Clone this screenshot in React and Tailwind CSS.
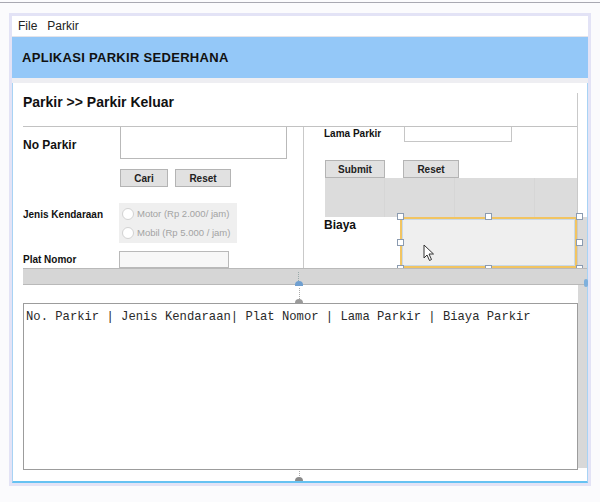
import React from 'react';

// small square grab handle of the GUI designer selection
const Handle = ({ className }) => (
  <div className={`absolute w-[7px] h-[7px] bg-white border border-[#8b9bb0] ${className}`} />
);

const Btn = ({ label, w }) => (
  <div className={`${w} h-[18px] bg-[#e1e1e1] border border-[#b4b4b4] flex items-center justify-center text-[10px] font-bold text-[#222]`}>
    {label}
  </div>
);

const Radio = ({ label }) => (
  <div className="flex items-center gap-[3px] h-[19px]">
    <div className="w-[12px] h-[12px] rounded-full bg-white border border-[#d2d2d2]" />
    <span className="text-[9.5px] text-[#a3a3a3] leading-none">{label}</span>
  </div>
);

export default function App() {
  return (
    <div className="w-[600px] h-[502px] bg-[#fbfbfd] overflow-hidden font-['Liberation_Sans',Arial,sans-serif] text-[#111]">
      <div className="h-[3px] border-b border-[#a9a9b2]" />

      {/* window frame */}
      <div className="mt-[10px] ml-[9px] w-[582px] border-[3px] border-[#e3e3f6]">
        {/* menu bar */}
        <div className="h-[20px] bg-white flex items-center pl-[6px] gap-[10px] text-[12px] text-[#222]">
          <span>File</span>
          <span>Parkir</span>
        </div>
        <div className="h-px bg-[#e4e4ea]" />

        {/* header */}
        <div className="h-[41px] bg-[#94c8f8] flex items-center pl-[10px]">
          <span className="text-[13px] font-bold tracking-[0.3px] text-[#111]">APLIKASI PARKIR SEDERHANA</span>
        </div>
        <div className="h-[5px] bg-[#eeeef2]" />

        {/* panel */}
        <div className="h-[400px] bg-white border-l border-r border-[#a8d3f4] border-b-2 border-b-[#66c2f2] pl-[10px] flex flex-col">
          {/* top form area */}
          <div className="h-[185px] flex">
            <div className="w-[555px] pt-[10px]">
              <div className="h-[175px] border-r border-[#c9c9c9] flex flex-col">
                <div className="h-[33px] text-[14px] font-bold leading-[18px]">Parkir &gt;&gt; Parkir Keluar</div>
                <div className="h-[142px] border-t border-[#c2c2c2] flex">
                  {/* left column */}
                  <div className="w-[280px] flex flex-col">
                    <div className="h-[32px] flex">
                      <div className="w-[97px] pt-[4px] flex items-center text-[12px] font-bold">No Parkir</div>
                      <div className="w-[167px] h-[32px] bg-white border border-t-0 border-[#b9b9b9]" />
                    </div>
                    <div className="mt-[10px] ml-[97px] flex gap-[7px]">
                      <Btn label="Cari" w="w-[48px]" />
                      <Btn label="Reset" w="w-[56px]" />
                    </div>
                    <div className="mt-[16px] flex">
                      <div className="w-[96px] mt-[6px] text-[10px] font-bold leading-[12px]">Jenis Kendaraan</div>
                      <div className="w-[118px] h-[40px] bg-[#efefef] pl-[3px] pt-px flex flex-col">
                        <Radio label="Motor (Rp 2.000/ jam)" />
                        <Radio label="Mobil (Rp 5.000 / jam)" />
                      </div>
                    </div>
                    <div className="mt-[8px] flex">
                      <div className="w-[96px] flex items-center text-[10px] font-bold">Plat Nomor</div>
                      <div className="w-[110px] h-[17px] bg-[#f7f7f7] border border-[#b9b9b9]" />
                    </div>
                  </div>

                  {/* right column */}
                  <div className="flex-1 border-l border-[#c9c9c9] flex flex-col">
                    <div className="h-[15px] flex ml-[20px]">
                      <div className="w-[80px] text-[10px] font-bold leading-[14px]">Lama Parkir</div>
                      <div className="w-[108px] h-[15px] bg-white border border-t-0 border-[#c6c6c6]" />
                    </div>
                    <div className="mt-[18px] ml-[21px] flex gap-[18px]">
                      <Btn label="Submit" w="w-[60px]" />
                      <Btn label="Reset" w="w-[56px]" />
                    </div>
                    <div className="ml-[21px] h-[39px] bg-[#dcdcdc] flex">
                      <div className="w-[60px] border-r border-[#d6d6d6]" />
                      <div className="w-[70px] border-r border-[#d6d6d6]" />
                      <div className="w-[80px] border-r border-[#d6d6d6]" />
                    </div>
                    <div className="h-[51px] flex">
                      <div className="w-[76px] ml-[20px] text-[12px] font-bold leading-[16px]">Biaya</div>
                      <div className="relative flex-1 bg-[#efefef] border-2 border-[#f1c462]">
                        <div className="absolute inset-0 border border-[#c9d9e8]" />
                        <Handle className="-left-[5px] -top-[6px]" />
                        <Handle className="left-[83px] -top-[6px]" />
                        <Handle className="-right-[8px] -top-[6px]" />
                        <Handle className="-left-[5px] top-[20px]" />
                        <Handle className="-right-[8px] top-[20px]" />
                        <Handle className="-left-[5px] -bottom-[6px]" />
                        <Handle className="left-[83px] -bottom-[6px]" />
                        <Handle className="-right-[8px] -bottom-[6px]" />
                        <svg className="absolute left-[21px] top-[25px]" width="12" height="18" viewBox="0 0 12 18">
                          <path d="M1 1 L1 14 L4 11 L6.5 16.5 L8.5 15.5 L6 10 L10.5 10 Z" fill="#fff" stroke="#333" strokeWidth="1" strokeLinejoin="round" />
                        </svg>
                      </div>
                    </div>
                  </div>
                </div>
              </div>
            </div>
            <div className="w-[9px] flex flex-col">
              <div className="h-[134px] bg-white" />
              <div className="flex-1 bg-[#dadada]" />
            </div>
          </div>

          {/* splitter */}
          <div className="relative h-[17px] bg-[#d6d6d6] border-t border-b border-[#b9b9b9]">
            <div className="absolute left-[275px] top-[3px] h-[9px] border-l border-dotted border-[#9aa]" />
            <div className="absolute left-[272px] bottom-[-2px] w-[8px] h-[5px] rounded-t-full bg-[#6f9fd0]" />
            <div className="absolute right-[-1px] top-[10px] w-[4px] h-[8px] rounded-full bg-[#7fb0dc]" />
          </div>

          {/* table text area */}
          <div className="flex-1 flex">
            <div className="w-[555px] flex flex-col">
              <div className="relative h-[18px]">
                <div className="absolute left-[276px] top-[3px] h-[11px] border-l border-dotted border-[#aaa]" />
                <div className="absolute left-[272px] bottom-0 w-[8px] h-[4px] rounded-t-full bg-[#9a9a9a]" />
              </div>
              <div className="h-[167px] border border-[#9c9c9c] pl-[2px] pt-[6px] font-['Liberation_Mono','Courier_New',monospace] text-[12.2px] leading-[14px] text-[#2a2a2a] whitespace-pre">
                No. Parkir | Jenis Kendaraan| Plat Nomor | Lama Parkir | Biaya Parkir
              </div>
              <div className="relative flex-1">
                <div className="absolute left-[276px] top-px h-[5px] border-l border-dotted border-[#aaa]" />
                <div className="absolute left-[272px] bottom-0 w-[8px] h-[4px] rounded-t-full bg-[#8a8a8a]" />
              </div>
            </div>
            <div className="w-[9px] flex flex-col">
              <div className="h-[183px] bg-[#d8d8d8]" />
              <div className="flex-1 bg-white" />
            </div>
          </div>
        </div>
      </div>
    </div>
  );
}
